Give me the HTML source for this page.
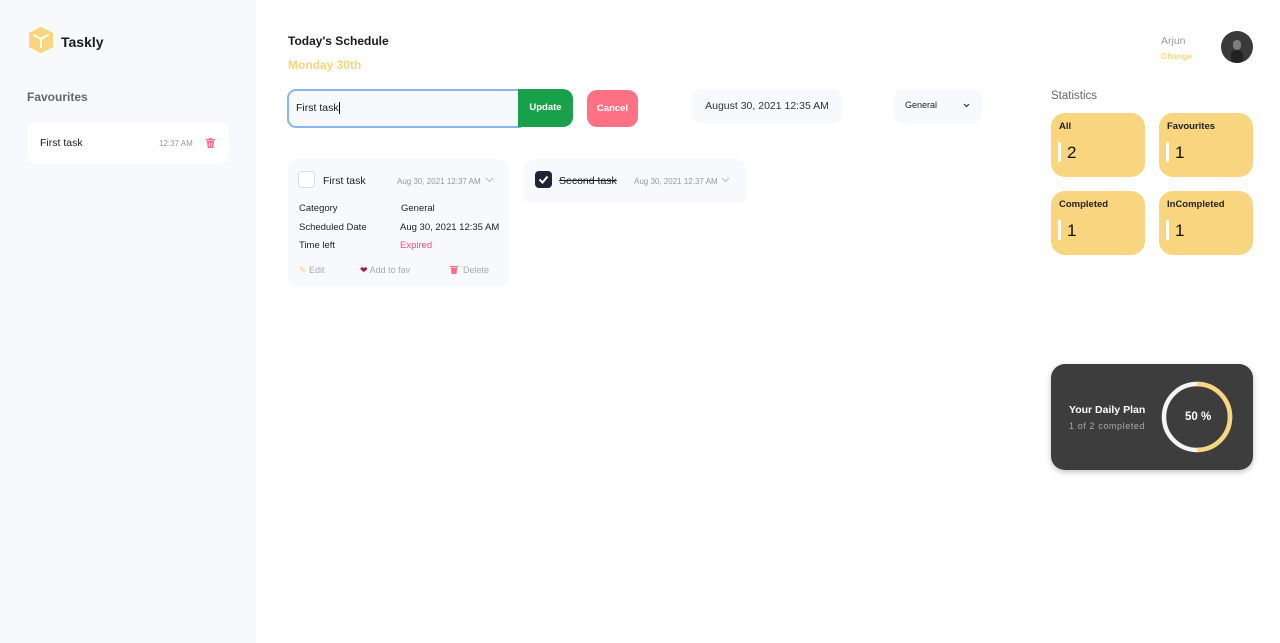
<!DOCTYPE html>
<html><head><meta charset="utf-8"><style>
*{margin:0;padding:0;box-sizing:border-box}
body{width:1280px;height:643px;background:#fff;font-family:"Liberation Sans",sans-serif;position:relative;overflow:hidden;color:#1a1a1a}
.a{position:absolute}
.side{left:0;top:0;width:256px;height:643px;background:#f8f9fc}
.b{font-weight:bold}
.card{background:#f8f9fc;border-radius:10px}
.stat{background:#f8d57e;border-radius:14px;width:94px;height:64px}
.stat .t{position:absolute;left:8px;top:8px;font-size:9.5px;font-weight:bold;color:#222}
.stat .bar{position:absolute;left:7px;top:29px;width:3px;height:20px;background:#fff;border-radius:2px}
.stat .n{position:absolute;left:16px;top:30px;font-size:17px;color:#111}
.lbl{font-size:9.5px;color:#222}
</style></head><body>
<div class="a side"></div>
<svg class="a" style="left:28px;top:27px" width="26" height="26" viewBox="0 0 26 26"><path d="M13 1 L24 6.5 V19.5 L13 25 L2 19.5 V6.5Z" fill="#f8d57e" stroke="#f8d57e" stroke-linejoin="round" stroke-width="2"/><path d="M6 8 L13 12 L20 8 M13 12 V20" stroke="#fff" stroke-width="2" fill="none" stroke-linecap="round"/></svg>
<div class="a b" style="left:61px;top:34px;font-size:14px">Taskly</div>
<div class="a b" style="left:27px;top:90px;font-size:12px;color:#666">Favourites</div>
<div class="a" style="left:27px;top:122px;width:202px;height:42px;background:#fff;border-radius:10px"></div>
<div class="a" style="left:40px;top:137px;font-size:10.5px">First task</div>
<div class="a" style="left:159px;top:139px;font-size:8px;color:#999">12:37 AM</div>
<svg class="a" style="left:206px;top:138px" width="9" height="10" viewBox="0 0 9 10"><rect x="0" y="1" width="9" height="1.5" fill="#f76f87"/><rect x="3" y="0" width="3" height="1.5" fill="#f76f87"/><path d="M1 3 H8 L7.3 10 H1.7Z" fill="#f76f87"/><path d="M3.3 4.5V8.5M5.7 4.5V8.5" stroke="#fff" stroke-width=".8"/></svg>

<div class="a b" style="left:288px;top:34px;font-size:12px">Today's Schedule</div>
<div class="a b" style="left:288px;top:58px;font-size:12px;color:#f8d57e">Monday 30th</div>
<div class="a" style="left:287px;top:89px;width:234px;height:39px;border:2px solid #8ab4f8;border-radius:9px 0 0 9px;background:#f8f9fc"></div>
<div class="a" style="left:296px;top:102px;font-size:10.5px">First task<span style="border-left:1px solid #000">&#8203;</span></div>
<div class="a" style="left:518px;top:89px;width:55px;height:38px;background:#18a04b;border-radius:0 10px 10px 0;color:#fff;font-size:9.5px;font-weight:bold;text-align:center;padding-top:13px">Update</div>
<div class="a" style="left:587px;top:90px;width:51px;height:37px;background:#ff7185;border-radius:10px;color:#fff;font-size:9.5px;font-weight:bold;text-align:center;padding-top:13px">Cancel</div>
<div class="a" style="left:692px;top:89px;width:150px;height:34px;background:#f8f9fc;border-radius:8px;font-size:10.5px;color:#333;padding-top:11px;text-align:center">August 30, 2021 12:35 AM</div>
<div class="a" style="left:894px;top:89px;width:88px;height:34px;background:#f8f9fc;border-radius:8px;font-size:9px;color:#222;padding:11px 0 0 11px">General</div>
<svg class="a" style="left:963px;top:103px" width="7" height="5"><path d="M1 1L3.5 3.5L6 1" stroke="#333" stroke-width="1.2" fill="none"/></svg>

<div class="a card" style="left:288px;top:159px;width:221px;height:128px"></div>
<div class="a" style="left:298px;top:171px;width:17px;height:17px;border:1.5px solid #ddd;border-radius:4px;background:#fff"></div>
<div class="a" style="left:323px;top:175px;font-size:10.5px">First task</div>
<div class="a" style="left:397px;top:177px;font-size:8px;color:#999">Aug 30, 2021 12:37 AM</div>
<svg class="a" style="left:485px;top:177px" width="9" height="6"><path d="M1 1L4.5 4.5L8 1" stroke="#bbb" fill="none"/></svg>
<div class="a lbl" style="left:299px;top:203px">Category</div>
<div class="a lbl" style="left:401px;top:203px">General</div>
<div class="a lbl" style="left:299px;top:222px">Scheduled Date</div>
<div class="a lbl" style="left:400px;top:222px">Aug 30, 2021 12:35 AM</div>
<div class="a lbl" style="left:299px;top:240px">Time left</div>
<div class="a lbl" style="left:400px;top:240px;color:#f4506d">Expired</div>
<div class="a" style="left:299px;top:265px;font-size:9px;color:#aaa"><span style="color:#f8d57e">&#9998;</span> Edit</div>
<div class="a" style="left:360px;top:265px;font-size:9px;color:#aaa"><span style="color:#a31a3f">&#10084;</span> Add to fav</div>
<svg class="a" style="left:450px;top:265px" width="8" height="9" viewBox="0 0 9 10"><rect x="0" y="1" width="9" height="1.5" fill="#f76f87"/><path d="M1 3 H8 L7.3 10 H1.7Z" fill="#f76f87"/></svg>
<div class="a" style="left:463px;top:265px;font-size:9px;color:#aaa">Delete</div>

<div class="a card" style="left:524px;top:159px;width:222px;height:43px;border-radius:10px 10px 0 0"></div>
<div class="a" style="left:535px;top:171px;width:17px;height:17px;background:#1f2533;border-radius:4px"></div>
<svg class="a" style="left:535px;top:171px" width="17" height="17"><path d="M4.5 8.5L7.5 11.5L12.5 5.5" stroke="#fff" stroke-width="2" fill="none"/></svg>
<div class="a" style="left:559px;top:175px;font-size:10.5px;text-decoration:line-through">Second task</div>
<div class="a" style="left:634px;top:177px;font-size:8px;color:#999">Aug 30, 2021 12:37 AM</div>
<svg class="a" style="left:721px;top:177px" width="9" height="6"><path d="M1 1L4.5 4.5L8 1" stroke="#bbb" fill="none"/></svg>

<div class="a" style="left:1161px;top:35px;font-size:10.5px;color:#999">Arjun</div>
<div class="a b" style="left:1161px;top:51px;font-size:8.5px;color:#f8d57e">Change</div>
<div class="a" style="left:1221px;top:31px;width:32px;height:32px;border-radius:50%;background:#3a3a3a;overflow:hidden"><div style="position:absolute;left:12px;top:9px;width:8px;height:10px;background:#aaa;border-radius:4px;opacity:.6"></div><div style="position:absolute;left:10px;top:19px;width:12px;height:14px;background:#222;border-radius:5px"></div></div>
<div class="a" style="left:1051px;top:90px;font-size:11.5px;color:#666">Statistics</div>
<div class="a stat" style="left:1051px;top:113px"><span class="t">All</span><span class="bar"></span><span class="n">2</span></div>
<div class="a stat" style="left:1159px;top:113px"><span class="t">Favourites</span><span class="bar"></span><span class="n">1</span></div>
<div class="a stat" style="left:1051px;top:191px"><span class="t">Completed</span><span class="bar"></span><span class="n">1</span></div>
<div class="a stat" style="left:1159px;top:191px"><span class="t">InCompleted</span><span class="bar"></span><span class="n">1</span></div>

<div class="a" style="left:1051px;top:364px;width:202px;height:106px;background:#3d3d3d;border-radius:14px;box-shadow:0 2px 6px rgba(0,0,0,.25)"></div>
<div class="a b" style="left:1069px;top:404px;font-size:10.5px;color:#fff">Your Daily Plan</div>
<div class="a" style="left:1069px;top:421px;font-size:9px;color:#aaa;letter-spacing:.6px">1 of 2 completed</div>
<svg class="a" style="left:1161px;top:381px" width="72" height="72"><circle cx="36" cy="36" r="33" stroke="#f4f4f4" stroke-width="4.5" fill="none"/><path d="M36 3 A33 33 0 0 1 36 69" stroke="#f8d57e" stroke-width="4.5" fill="none"/></svg>
<div class="a b" style="left:1185px;top:411px;font-size:11.5px;color:#fff">50 %</div>
</body></html>
